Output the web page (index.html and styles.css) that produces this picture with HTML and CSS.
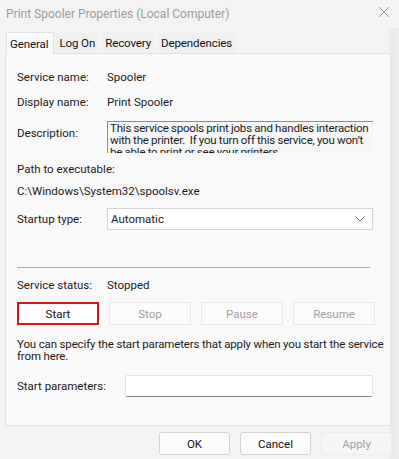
FILE: index.html
```html
<!DOCTYPE html>
<html>
<head>
<meta charset="utf-8">
<link rel="stylesheet" href="styles.css">
</head>
<body>
<div class="window">
  <div class="titlebar">
    <span class="title">Print Spooler Properties (Local Computer)</span>
    <svg class="close" width="12" height="12" viewBox="0 0 12 12"><path d="M1 1L11 11M11 1L1 11" stroke="#9a9a9a" stroke-width="1" fill="none"/></svg>
  </div>
  <div class="tabs">
    <div class="tab active">General</div>
    <div class="tab">Log On</div>
    <div class="tab">Recovery</div>
    <div class="tab">Dependencies</div>
  </div>
  <div class="panel">
    <div class="row r-name"><span class="label">Service name:</span><span class="value">Spooler</span></div>
    <div class="row r-disp"><span class="label">Display name:</span><span class="value">Print Spooler</span></div>
    <div class="row r-desc"><span class="label">Description:</span>
      <div class="descbox"><div class="desctext">This service spools print jobs and handles interaction with the printer.&nbsp; If you turn off this service, you won’t be able to print or see your printers.</div></div>
    </div>
    <div class="line r-path">Path to executable:</div>
    <div class="line r-exe">C:\Windows\System32\spoolsv.exe</div>
    <div class="row r-start"><span class="label">Startup type:</span>
      <div class="select"><span>Automatic</span><svg width="10" height="6" viewBox="0 0 10 6"><path d="M0.5 0.5L5 5L9.5 0.5" stroke="#777" stroke-width="1" fill="none"/></svg></div>
    </div>
    <div class="sep"></div>
    <div class="row r-status"><span class="label">Service status:</span><span class="value">Stopped</span></div>
    <div class="btnrow">
      <div class="btn start">Start</div>
      <div class="btn dis">Stop</div>
      <div class="btn dis">Pause</div>
      <div class="btn dis">Resume</div>
    </div>
    <div class="hint">You can specify the start parameters that apply when you start the service from here.</div>
    <div class="row r-params"><span class="label wide">Start parameters:</span><div class="input"></div></div>
  </div>
  <div class="footer">
    <div class="fbtn">OK</div>
    <div class="fbtn">Cancel</div>
    <div class="fbtn dis">Apply</div>
  </div>
</div>
</body>
</html>
```
FILE: styles.css
```css
* { box-sizing: border-box; }
html, body { margin: 0; padding: 0; }
body {
  width: 399px;
  height: 459px;
  background: #f0f0f0;
  font-family: Roboto, "Noto Sans", sans-serif;
  font-size: 11.5px;
  color: #1a1a1a;
  overflow: hidden;
}
.window {
  width: 399px;
  height: 459px;
  background: linear-gradient(to right, #f3f3f3 0, #f3f3f3 388px, #e9e9e9 392px, #ececec 399px);
}
.titlebar {
  height: 28px;
  display: flex;
  align-items: center;
  justify-content: space-between;
  padding: 0 9px 0 6px;
  background: #f3f3f3;
}
.title { color: #9d9d9d; font-size: 12px; }
.close { margin-top: -4px; }
.tabs {
  display: flex;
  align-items: flex-end;
  height: 25px;
  margin-left: 6px;
}
.tab {
  height: 20px;
  padding: 0 4px;
  display: flex;
  align-items: center;
  color: #111;
  background: #f0f0f0;
  margin-right: 2px;
  letter-spacing: -0.1px;
}
.tab.active {
  height: 22px;
  background: #fafafa;
  border: 1px solid #e1e1e1;
  border-bottom: none;
  padding: 0 5px 0 3px;
  margin-right: 1px;
  position: relative;
  z-index: 1;
  margin-bottom: -1px;
}
.panel {
  margin-left: 5px;
  width: 386px;
  height: 373px;
  background: #f9f9f9;
  border: 1px solid #e2e2e2;
  padding: 0 0 0 11px;
}
.row { display: flex; align-items: center; }
.label { width: 90px; flex: none; }
.label.wide { width: 108px; }
.r-name { height: 20px; margin-top: 13px; }
.r-disp { height: 20px; margin-top: 5px; }
.r-desc { height: 33px; margin-top: 9px; align-items: flex-start; }
.r-desc .label { padding-top: 5px; }
.descbox {
  width: 266px;
  height: 32px;
  border-top: 1px solid #8a8a8a;
  border-left: 1px solid #8a8a8a;
  background: #f6f6f6;
  overflow: hidden;
  padding: 0 0 0 2px;
}
.desctext { width: 262px; line-height: 12px; letter-spacing: -0.2px; word-spacing: -0.3px; }
.line { height: 20px; display: flex; align-items: center; }
.r-path { margin-top: 5px; }
.r-exe { margin-top: 2px; }
.r-start { height: 22px; margin-top: 7px; }
.select {
  width: 266px;
  height: 22px;
  background: #fff;
  border: 1px solid #d6d6d6;
  display: flex;
  align-items: center;
  justify-content: space-between;
  padding: 0 7px 0 3px;
}
.sep {
  width: 353px;
  height: 1px;
  background: #a8a8a8;
  margin-top: 37px;
}
.r-status { height: 20px; margin-top: 7px; }
.btnrow { display: flex; gap: 10px; margin-top: 7px; }
.btn {
  width: 82px;
  height: 23px;
  display: flex;
  align-items: center;
  justify-content: center;
  background: #fbfbfb;
  border: 1px solid #e6e6e6;
  border-radius: 2px;
}
.btn.start { border: 2px solid #d4161c; border-radius: 0; background: #fdfdfd; color: #111; }
.btn.dis { color: #a0a0a0; }
.hint { width: 372px; margin-top: 13px; line-height: 12px; letter-spacing: -0.15px; }
.r-params { height: 22px; margin-top: 13px; }
.input {
  width: 248px;
  height: 22px;
  background: #fff;
  border: 1px solid #e4e4e4;
  border-bottom: 1px solid #8a8a8a;
  border-radius: 2px;
}
.footer {
  display: flex;
  justify-content: flex-end;
  gap: 10px;
  padding-right: 7px;
  margin-top: 6px;
}
.fbtn {
  width: 71px;
  height: 23px;
  display: flex;
  align-items: center;
  justify-content: center;
  background: #fbfbfb;
  border: 1px solid #d2d2d2;
  border-radius: 3px;
  color: #111;
}
.fbtn.dis { color: #a3a3a3; border-color: #ececec; background: #f5f5f5; }
```
